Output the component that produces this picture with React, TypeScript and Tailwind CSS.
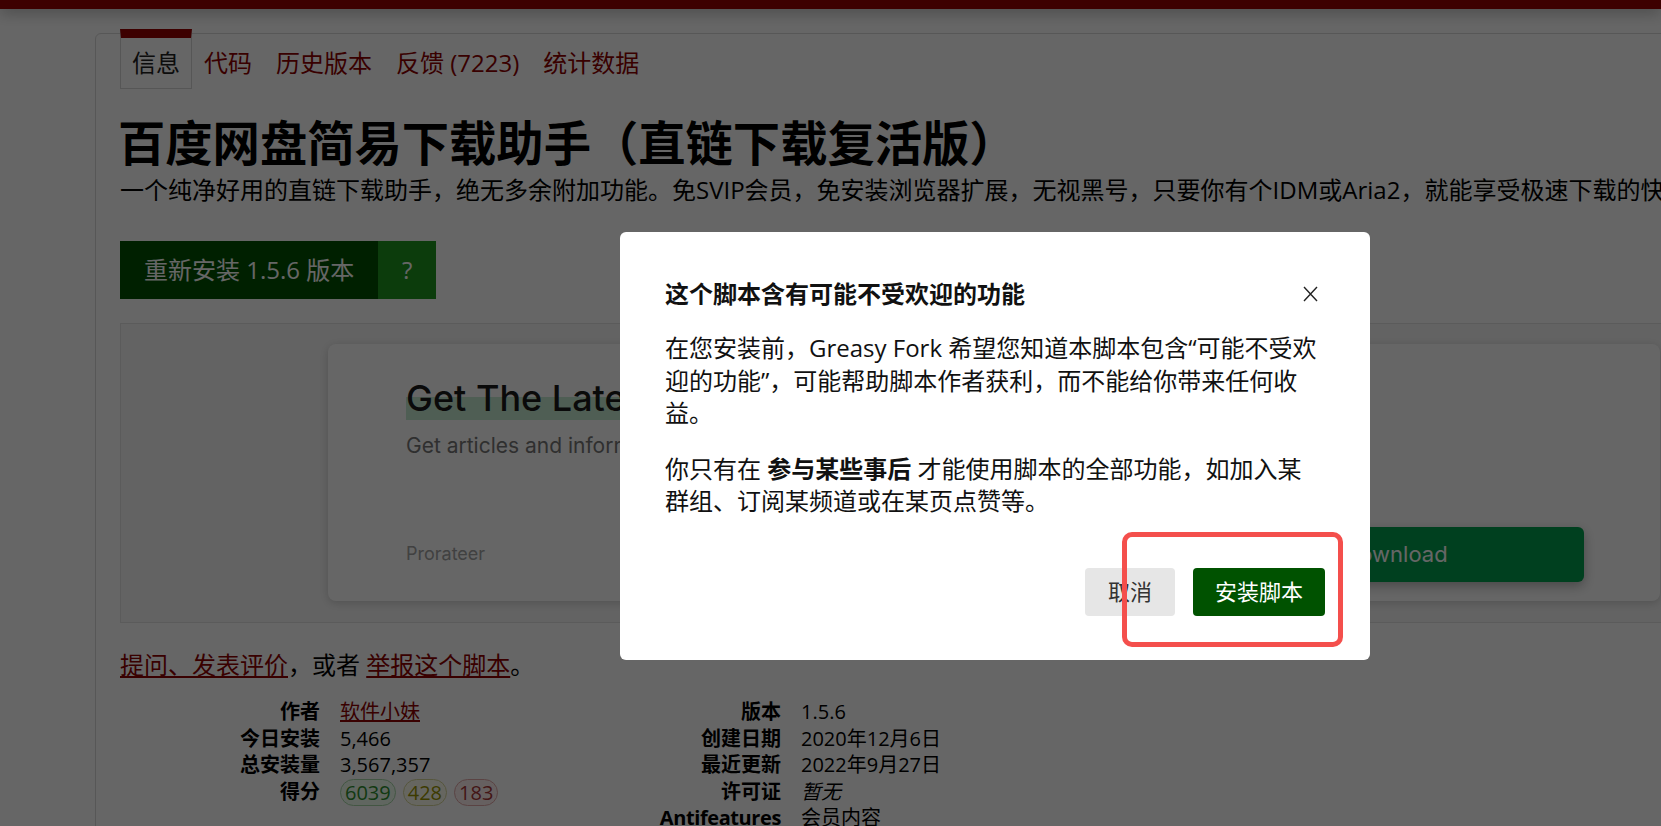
import React from "react";

function Tab({ label, active }: { label: string; active?: boolean }) {
  if (active) {
    return (
      <div className="flex h-[60px] items-center border-x border-b border-t-[9px] border-x-[#d6d6d6] border-b-[#d6d6d6] border-t-[#990000] bg-white px-[11px] text-[#222]">
        {label}
      </div>
    );
  }
  return (
    <div className="flex h-[60px] items-center border-t-[9px] border-t-transparent px-[12px] pb-[1px] text-[#8e0000]">
      {label}
    </div>
  );
}

function Badge({ n, kind }: { n: string; kind: "good" | "ok" | "bad" }) {
  const cls =
    kind === "good"
      ? "bg-[#effff0] border-[#a8d8a8] text-[#2f8f2f]"
      : kind === "ok"
      ? "bg-[#fffff0] border-[#d6d69a] text-[#9a9400]"
      : "bg-[#fff0f0] border-[#e0a8a8] text-[#a83838]";
  return (
    <span className={`inline-flex h-[27px] items-center rounded-full border px-[4px] leading-[27px] ${cls}`}>
      {n}
    </span>
  );
}

export default function App() {
  return (
    <div className="relative h-[826px] w-[1661px] overflow-hidden bg-white font-['Open_Sans','Noto_Sans_CJK_SC',sans-serif] text-black">
      {/* top header bar */}
      <div className="relative z-10 h-[9px] bg-[#990000] shadow-[0_2px_16px_rgba(0,0,0,0.4)]" />

      <div className="pl-[95px] pt-[24px]">
        <div className="w-[1640px] rounded-tl-[6px] border border-[#dadada] pb-[40px] pl-[24px]">
          {/* tabs */}
          <div className="-mt-[5px] flex text-[24px] leading-[32px]">
            <Tab label="信息" active />
            <Tab label="代码" />
            <Tab label="历史版本" />
            <Tab label="反馈 (7223)" />
            <Tab label="统计数据" />
          </div>

          <h1 className="-ml-[2px] mt-[26px] whitespace-nowrap text-[47.3px] font-bold leading-[56px]">
            百度网盘简易下载助手（直链下载复活版）
          </h1>
          <p className="mt-[3px] whitespace-nowrap text-[24px] leading-[32px]">
            一个纯净好用的直链下载助手，绝无多余附加功能。免SVIP会员，免安装浏览器扩展，无视黑号，只要你有个IDM或Aria2，就能享受极速下载的快感。
          </p>

          {/* install button */}
          <div className="mt-[35px] flex h-[58px] text-[24px] text-white">
            <div className="flex items-center bg-[#005200] px-[24px]">重新安装 1.5.6 版本</div>
            <div className="flex w-[58px] items-center justify-center bg-[#1e971e]">?</div>
          </div>

          {/* ad box */}
          <div className="mt-[24px] h-[300px] border border-[#e4e4e4] bg-[#f8f8f8] pl-[207px] pt-[20px]">
            <div className="flex h-[257px] w-[1332px] justify-between rounded-[8px] bg-white pl-[78px] pr-[76px] font-['Inter',sans-serif] shadow-[0_2px_10px_rgba(0,0,0,0.18)]">
              <div className="flex flex-col pt-[34px]">
                <div className="relative self-start">
                  <span className="absolute left-0 right-0 top-[19px] h-[23px] bg-[#c5ebd2]" />
                  <span className="relative whitespace-nowrap text-[36px] font-medium leading-[40px] text-[#1a1a1a]">
                    Get The Latest Updates
                  </span>
                </div>
                <div className="mt-[14px] whitespace-nowrap text-[21px] leading-[28px] text-[#777]">
                  Get articles and information delivered to your inbox
                </div>
                <div className="mt-[82px] text-[18px] leading-[24px] text-[#a2a2a2]">Prorateer</div>
              </div>
              <div className="flex items-end pb-[19px]">
                <div className="flex h-[55px] w-[377px] items-center justify-center rounded-[6px] bg-[#00a04e] text-[22px] text-white shadow-[0_4px_12px_rgba(0,0,0,0.3)]">
                  Download
                </div>
              </div>
            </div>
          </div>

          {/* links */}
          <p className="mt-[26px] text-[24px] leading-[32px]">
            <a className="text-[#8e0000] underline">提问、发表评价</a>，或者{" "}
            <a className="text-[#8e0000] underline">举报这个脚本</a>。
          </p>

          {/* stats */}
          <div className="mt-[18px] flex text-[20px] leading-[26.6px]">
            <dl className="grid w-[461px] grid-cols-[200px_auto] content-start gap-x-[20px]">
              <dt className="text-right font-bold">作者</dt>
              <dd>
                <a className="text-[#8e0000] underline">软件小妹</a>
              </dd>
              <dt className="text-right font-bold">今日安装</dt>
              <dd>5,466</dd>
              <dt className="text-right font-bold">总安装量</dt>
              <dd>3,567,357</dd>
              <dt className="text-right font-bold">得分</dt>
              <dd className="flex items-center gap-[7px]">
                <Badge n="6039" kind="good" />
                <Badge n="428" kind="ok" />
                <Badge n="183" kind="bad" />
              </dd>
            </dl>
            <dl className="grid w-[500px] grid-cols-[200px_auto] content-start gap-x-[20px]">
              <dt className="text-right font-bold">版本</dt>
              <dd>1.5.6</dd>
              <dt className="text-right font-bold">创建日期</dt>
              <dd>2020年12月6日</dd>
              <dt className="text-right font-bold">最近更新</dt>
              <dd>2022年9月27日</dd>
              <dt className="text-right font-bold">许可证</dt>
              <dd className="italic">暂无</dd>
              <dt className="text-right font-bold tracking-[-0.4px]">Antifeatures</dt>
              <dd>会员内容</dd>
            </dl>
          </div>
        </div>
      </div>

      {/* dim overlay */}
      <div className="absolute inset-0 z-20 bg-black/60" />

      {/* modal */}
      <div className="absolute left-[620px] top-[232px] z-30 w-[750px] rounded-[6px] bg-white p-[45px] pb-[44px] text-[#111]">
        <div className="flex items-center justify-between">
          <h2 className="text-[24px] font-bold leading-[33px]">这个脚本含有可能不受欢迎的功能</h2>
          <svg className="mr-[7px]" width="15" height="16" viewBox="0 0 15 16" fill="none">
            <path d="M1 1L14 15M14 1L1 15" stroke="#222" strokeWidth="1.4" />
          </svg>
        </div>
        <p className="mt-[22px] whitespace-nowrap text-[24px] leading-[32.5px]">
          在您安装前，Greasy Fork 希望您知道本脚本包含“可能不受欢
          <br />
          迎的功能”，可能帮助脚本作者获利，而不能给你带来任何收
          <br />
          益。
        </p>
        <p className="mt-[23px] whitespace-nowrap text-[24px] leading-[32.5px]">
          你只有在 <b>参与某些事后</b> 才能使用脚本的全部功能，如加入某
          <br />
          群组、订阅某频道或在某页点赞等。
        </p>
        <div className="mt-[50px] flex justify-end gap-[18px] text-[22px]">
          <button className="flex h-[48px] w-[90px] items-center justify-center rounded-[4px] bg-[#e6e6e6] text-[#333]">
            取消
          </button>
          <button className="flex h-[48px] w-[132px] items-center justify-center rounded-[4px] bg-[#005200] text-white">
            安装脚本
          </button>
        </div>
      </div>

      {/* red annotation box */}
      <div className="absolute left-[1122px] top-[532px] z-40 h-[115px] w-[221px] rounded-[10px] border-[5px] border-[#f44f4c]" />
    </div>
  );
}
